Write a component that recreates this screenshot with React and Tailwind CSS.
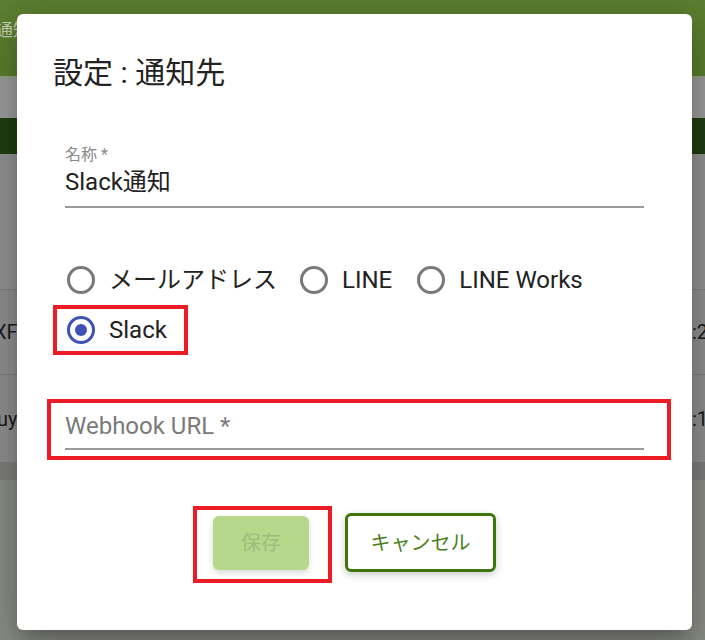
function Radio({ label, checked = false, className = "" }) {
  return (
    <div className={`flex items-center ${className}`}>
      <span
        className={
          checked
            ? "flex h-[28px] w-[28px] shrink-0 items-center justify-center rounded-full border-[3px] border-[#3f51b5]"
            : "flex h-[28px] w-[28px] shrink-0 items-center justify-center rounded-full border-[3px] border-[#787878]"
        }
      >
        {checked && <span className="h-[12px] w-[12px] rounded-full bg-[#3f51b5]" />}
      </span>
      <span className="ml-[14px] whitespace-nowrap text-[24px] leading-[30px] text-[#222]">{label}</span>
    </div>
  );
}

export default function App() {
  return (
    <div className="relative h-[640px] w-[705px] overflow-hidden bg-[#8b8e86] font-['Roboto','Noto_Sans_CJK_JP',sans-serif]">
      {/* dimmed page behind the dialog */}
      <div className="h-[76px] overflow-hidden whitespace-nowrap bg-[#5b7e2f] pt-[18px]">
        <span className="-ml-[4px] inline-block text-[17px] text-[#c3ceb6]">通知先設定</span>
      </div>
      <div className="h-[1px] bg-[#8ea56f]" />
      <div className="h-[41px] bg-[#9c9c9c]" />
      <div className="h-[36px] bg-[#1f3f11]" />
      <div className="h-[136px] border-b border-[#7f7f7f] bg-[#929292]" />
      <div className="flex h-[85px] items-center overflow-hidden whitespace-nowrap border-b border-[#7f7f7f] bg-[#8f8f8f] text-[20px] text-[#1b1b1b]">
        <span className="w-[692px] shrink-0">
          <span className="-ml-[6px] inline-block">XF</span>
        </span>
        <span className="shrink-0">:25</span>
      </div>
      <div className="flex h-[87px] items-center overflow-hidden whitespace-nowrap bg-[#8f8f8f] text-[20px] text-[#1b1b1b]">
        <span className="w-[692px] shrink-0">
          <span className="-ml-[3px] inline-block">uyo</span>
        </span>
        <span className="shrink-0">:12</span>
      </div>
      <div className="h-[18px] bg-[#7e7f7c]" />

      {/* dialog */}
      <div className="absolute left-[17px] top-[14px] h-[616px] w-[675px] rounded-[6px] bg-white px-[36px] pt-[40px] shadow-[0_11px_15px_-7px_rgba(0,0,0,0.2),0_24px_38px_3px_rgba(0,0,0,0.14),0_9px_46px_8px_rgba(0,0,0,0.12)]">
        <h2 className="text-[30px] leading-[37px] text-[#222]">設定 : 通知先</h2>

        <div className="mx-[12px] mt-[53px] border-b-2 border-[#9a9a9a] pb-[9px]">
          <div className="text-[16px] leading-[21px] text-[#8a8a8a]">名称 *</div>
          <div className="mt-[2px] text-[24px] leading-[30px] text-[#222]">Slack通知</div>
        </div>

        <div className="mt-[51px] flex h-[42px] items-center pl-[14px]">
          <Radio label="メールアドレス" />
          <Radio label="LINE" className="ml-[23px]" />
          <Radio label="LINE Works" className="ml-[25px]" />
        </div>

        <div className="mt-[4px] flex">
          <div className="flex h-[50px] items-center border-4 border-[#ed1c24] pl-[10px] pr-[17px]">
            <Radio label="Slack" checked />
          </div>
        </div>

        <div className="-ml-[6px] mt-[44px] w-[624px] border-4 border-[#ed1c24] pb-[6px] pl-[14px] pr-[23px] pt-[8px]">
          <div className="border-b-2 border-[#9a9a9a] pb-[7px] text-[24px] leading-[30px] text-[#7a7a7a]">
            Webhook URL *
          </div>
        </div>

        <div className="ml-[140px] mt-[46px] flex items-start">
          <div className="border-4 border-[#ed1c24] pb-[9px] pl-[16px] pr-[19px] pt-[6px]">
            <div className="flex h-[54px] w-[96px] items-center justify-center rounded-[6px] bg-[#b6d88b] text-[20px] text-[#9dbd7c] shadow-[0_3px_6px_rgba(0,0,0,0.15)]">
              保存
            </div>
          </div>
          <div className="ml-[13px] mt-[7px] flex h-[59px] w-[151px] items-center justify-center rounded-[6px] border-[3px] border-[#3e760c] text-[20px] text-[#4b7f1d] shadow-[0_3px_8px_rgba(0,0,0,0.2)]">
            キャンセル
          </div>
        </div>
      </div>
    </div>
  );
}
